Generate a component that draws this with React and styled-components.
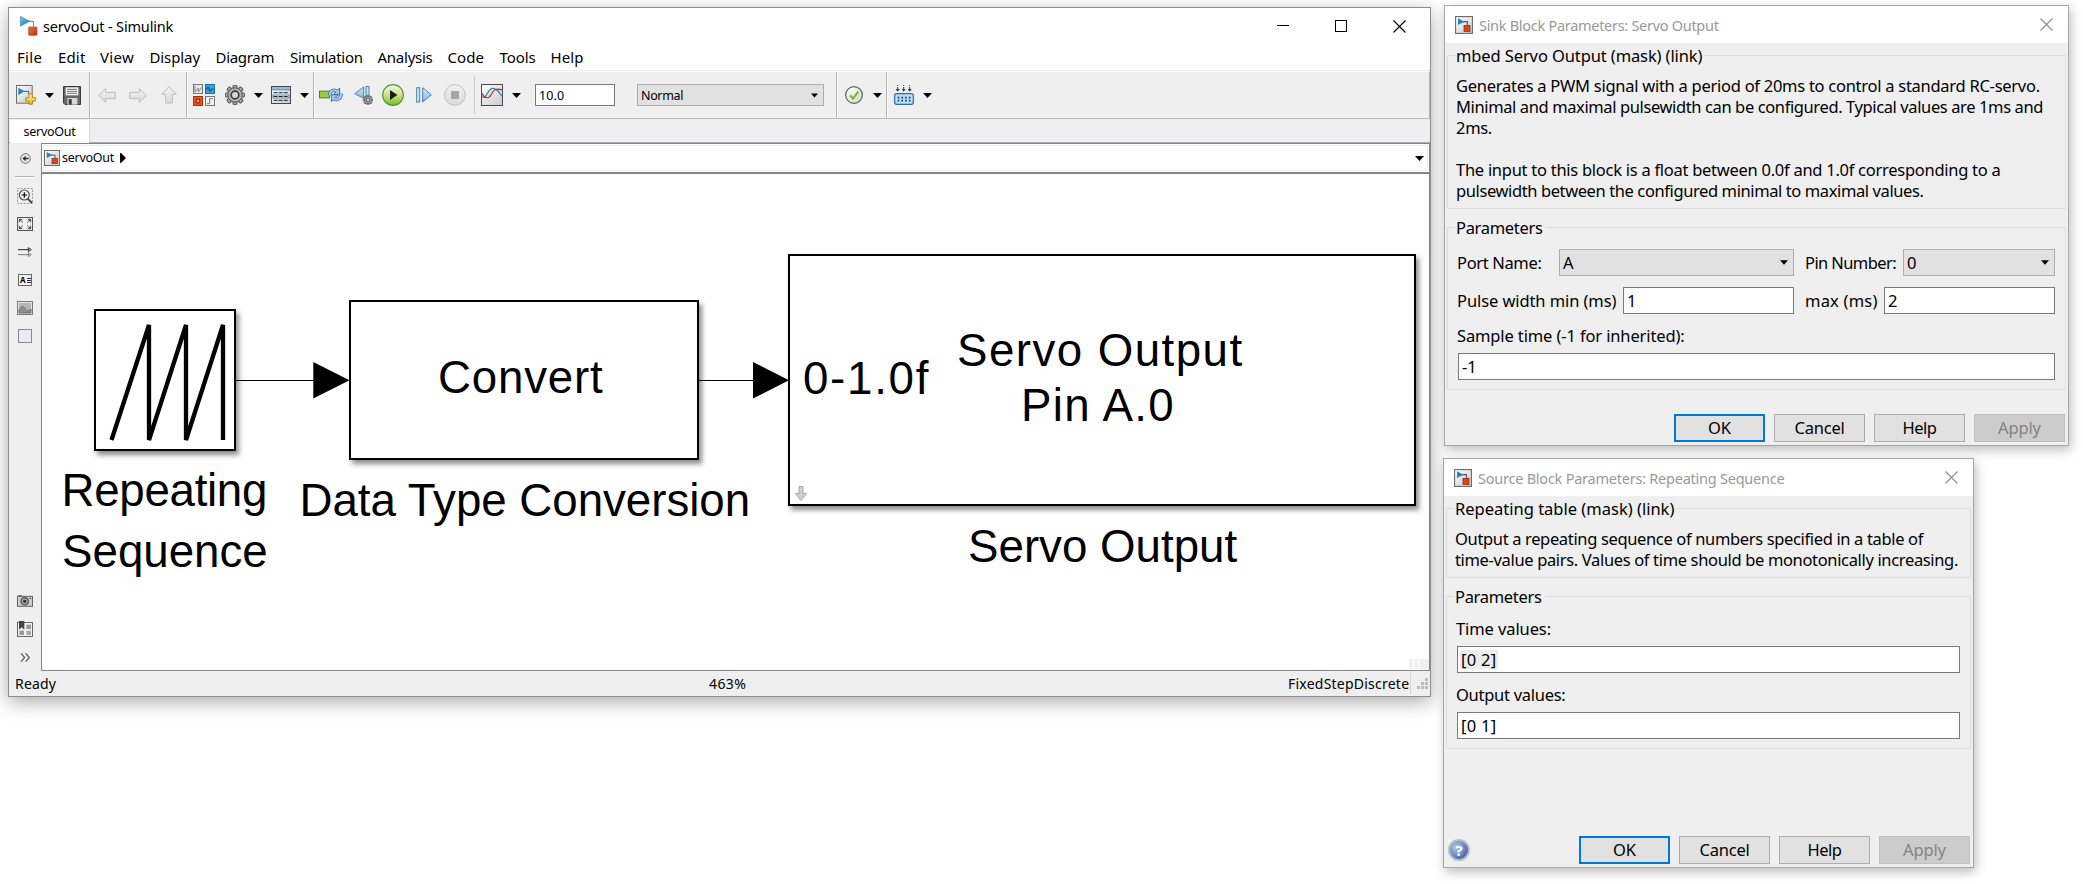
import React from "react";
import styled, { createGlobalStyle, css } from "styled-components";

const uiFont = `"Noto Sans", "Open Sans", sans-serif`;

const GlobalStyle = createGlobalStyle`
  * { box-sizing: border-box; }
  html, body { margin: 0; padding: 0; background: #fff; }
  body { font-family: ${uiFont}; color: #000; overflow: hidden; }
`;

const Desktop = styled.main`
  position: relative;
  width: 2083px;
  height: 884px;
  overflow: hidden;
  background: #fff;
`;

const Tracked = styled.span`
  letter-spacing: ${(p) => p.$ls || 0}px;
  white-space: pre;
`;

const T = ({ ls, children }) => <Tracked $ls={ls}>{children}</Tracked>;

/* ---------- window chrome ---------- */

const AppWindow = styled.section`
  position: absolute;
  left: 8px;
  top: 7px;
  width: 1423px;
  height: 690px;
  display: flex;
  flex-direction: column;
  border: 1px solid #8c8c8c;
  background: #efefef;
  box-shadow: 0 5px 18px rgba(0, 0, 0, 0.33);
`;

const TitleBar = styled.header`
  height: 34px;
  display: flex;
  align-items: center;
  padding: 2px 24px 0 9px;
  background: #fff;
`;

const TitleText = styled.h1`
  flex: 1;
  margin: 0 0 0 5px;
  font-size: 14.5px;
  font-weight: 400;
  line-height: 20px;
`;

const WindowControls = styled.div`
  display: flex;
  align-items: center;
  gap: 46px;
`;

const MenuBar = styled.nav`
  height: 29px;
  display: flex;
  align-items: center;
  padding: 2px 0 0 8px;
  background: #fff;
  border-bottom: 1px solid #ececec;
`;

const MenuItem = styled.span`
  width: ${(p) => p.$w}px;
  font-size: 15px;
  line-height: 20px;
`;

const Toolbar = styled.div`
  height: 48px;
  display: flex;
  border-top: 1px solid #fff;
  border-bottom: 1px solid #b9b9b9;
  border-right: 1px solid #b9b9b9;
`;

const ToolGroup = styled.div`
  display: flex;
  align-items: center;
  width: ${(p) => p.$w}px;
  border-right: ${(p) => (p.$last ? "none" : "1px solid #b4b4b4")};
  box-shadow: ${(p) => (p.$last ? "none" : "1px 0 0 #fff")};
`;

const Tool = styled.span`
  display: flex;
  flex: none;
  margin-left: ${(p) => p.$ml}px;
`;

const ToolRule = styled.span`
  width: 1px;
  height: 38px;
  margin-left: 8px;
  background: #cdcdcd;
`;

const TabStrip = styled.div`
  height: 24px;
  display: flex;
  padding: 1px 0 0 1px;
  border-bottom: 1px solid #a9aab0;
`;

const Tab = styled.div`
  width: 80px;
  height: 23px;
  background: #fff;
  border-right: 1px solid #d8d8d8;
  text-align: center;
  font-size: 12.5px;
  line-height: 24px;
`;

const Workspace = styled.div`
  flex: 1;
  display: flex;
  min-height: 0;
`;

const Palette = styled.aside`
  width: 32px;
  display: flex;
  flex-direction: column;
  align-items: center;
  justify-content: space-between;
`;

const PaletteGroup = styled.div`
  display: flex;
  flex-direction: column;
  align-items: center;
`;

const Slot = styled.span`
  height: ${(p) => p.$h || 28}px;
  display: flex;
  align-items: center;
  justify-content: center;
`;

const PaletteRule = styled.span`
  width: 19px;
  height: 2px;
  margin: 3px 0 4px -1px;
  background: #b4b4b4;
  border-bottom: 1px solid #fff;
`;

const Editor = styled.div`
  flex: 1;
  display: flex;
  flex-direction: column;
  border: 1px solid #83868f;
`;

const Breadcrumb = styled.div`
  height: 26px;
  margin: 1px;
  display: flex;
  align-items: center;
  border: 1px solid #ededed;
  background: #fff;
  font-size: 12.5px;
  line-height: 16px;
  outline: 1px solid #fff;
  padding-right: 3px;
`;

const CrumbText = styled.span`
  margin-left: 2px;
`;

const CrumbCaret = styled.span`
  display: flex;
  margin: -1px 0 0 6px;
  flex: 1;
`;

const StatusBar = styled.footer`
  height: 25px;
  display: flex;
  align-items: center;
  font-size: 14px;
  line-height: 20px;
`;

const StatusCell = styled.span`
  margin-left: ${(p) => p.$ml}px;
  width: ${(p) => p.$w}px;
  margin-top: ${(p) => p.$mt || 0}px;
`;

const StatusRule = styled.span`
  width: 1px;
  height: 21px;
  background: #d5d5d5;
  margin-right: 6px;
`;

/* ---------- model canvas ---------- */

const Canvas = styled.div`
  position: relative;
  flex: 1;
  border-top: 2px solid #83868f;
  background: #fff;
  overflow: hidden;
`;

const Block = styled.div`
  position: absolute;
  left: ${(p) => p.$x - 42}px;
  top: ${(p) => p.$y - 174}px;
  width: ${(p) => p.$w}px;
  height: ${(p) => p.$h}px;
  border: 2px solid #000;
  background: #fff;
  box-shadow: 3px 4px 5px rgba(0, 0, 0, 0.45);
`;

const ModelText = styled.div`
  position: absolute;
  left: ${(p) => p.$x - 42}px;
  top: ${(p) => p.$base - 174 - 46}px;
  font-family: "Liberation Sans", Arial, sans-serif;
  font-size: 45.7px;
  line-height: 60px;
  white-space: pre;
`;

const Wires = styled.svg`
  position: absolute;
  left: 0;
  top: 0;
`;

const LinkBadge = styled.svg`
  position: absolute;
  left: 4px;
  bottom: 2px;
`;

const Sawtooth = styled.svg`
  display: block;
`;

const ScrollCorner = styled.div`
  position: absolute;
  right: 0;
  bottom: 1px;
  display: flex;
  gap: 1px;
  height: 10px;
`;

const ScrollBit = styled.span`
  width: ${(p) => p.$w}px;
  background: #f1f1f1;
`;

/* ---------- parameter dialogs ---------- */

const DialogFrame = styled.section`
  position: absolute;
  left: ${(p) => p.$x}px;
  top: ${(p) => p.$y}px;
  width: ${(p) => p.$w}px;
  height: ${(p) => p.$h}px;
  display: flex;
  flex-direction: column;
  border: 1px solid #a6a6a6;
  background: #efefef;
  box-shadow: 2px 4px 10px rgba(0, 0, 0, 0.26);
  font-size: 16.5px;
  line-height: 20px;
`;

const DialogTitle = styled.header`
  height: 37px;
  display: flex;
  align-items: center;
  padding: 0 15px 0 10px;
  background: #fff;
  color: #999;
  font-size: 14.5px;
`;

const DialogName = styled.h2`
  flex: 1;
  margin: 0 0 0 6px;
  font: inherit;
`;

const Group = styled.div`
  height: ${(p) => p.$h}px;
  margin: ${(p) => p.$mt}px 2px 0;
  border: 1px solid #dcdcdc;
`;

const Legend = styled.div`
  width: fit-content;
  height: 20px;
  margin: -10px 0 0 7px;
  padding: 0 3px 0 1px;
  background: #efefef;
`;

const Description = styled.div`
  margin: 9px 0 0 8px;
  line-height: 21px;
`;

const DescLine = styled.div`
  height: 21px;
`;

const Row = styled.div`
  display: flex;
  align-items: center;
  margin-top: ${(p) => p.$mt}px;
  padding: 0 10px 0 9px;
`;

const FieldLabel = styled.label`
  flex: none;
  width: ${(p) => p.$w}px;
  margin-left: ${(p) => p.$ml || 0}px;
`;

const boxed = css`
  display: flex;
  align-items: center;
  height: ${(p) => p.$h || 27}px;
  margin-left: ${(p) => p.$ml || 0}px;
  padding-left: 3px;
`;

const Input = styled.div`
  ${boxed}
  flex: ${(p) => (p.$w ? `0 0 ${p.$w}px` : 1)};
  border: 1px solid #7a7a7a;
  background: #fff;
  font-size: ${(p) => (p.$small ? 12.5 : 16.5)}px;
`;

const Select = styled.div`
  ${boxed}
  flex: 0 0 ${(p) => p.$w}px;
  justify-content: space-between;
  padding-right: 5px;
  border: 1px solid #adadad;
  background: #e1e1e1;
  font-size: ${(p) => (p.$small ? 12.5 : 16.5)}px;
`;

const Selection = styled.span`
  margin-left: -1px;
  padding: 0 1px;
  height: 19px;
  line-height: 19px;
  background: #ececec;
`;

const DialogFooter = styled.footer`
  display: flex;
  align-items: center;
  gap: 9px;
  margin-top: auto;
  padding: 0 3px 3px;
`;

const FooterHelp = styled.span`
  display: flex;
  flex: 1;
  margin-left: 1px;
`;

const Button = styled.button`
  width: 91px;
  height: 28px;
  padding: 0;
  border: 1px solid #adadad;
  background: #e1e1e1;
  color: #000;
  font-family: inherit;
  font-size: 16.5px;
  line-height: 20px;
  ${(p) => p.$primary && css`border: 2px solid #0078d7;`}
  ${(p) => p.disabled && css`
    border-color: #bfbfbf;
    background: #cccccc;
    color: #838383;
  `}
`;

/* ---------- icons ---------- */

const Svg = styled.svg`
  display: block;
  flex: none;
`;

const Defs = styled.svg`
  position: absolute;
`;

const Icon = ({ w, h, vb, children }) => (
  <Svg width={w} height={h} viewBox={vb || `0 0 ${w * 3} ${h * 3}`} fill="none">
    {children}
  </Svg>
);

const Gradients = () => (
  <Defs width="0" height="0">
    <defs>
      <linearGradient id="blue" x1="0" y1="0" x2="1" y2="1"><stop offset="0" stopColor="#7cc4ee" /><stop offset="1" stopColor="#1a6fb0" /></linearGradient>
      <linearGradient id="orange" x1="0" y1="0" x2="1" y2="1"><stop offset="0" stopColor="#f0702f" /><stop offset="1" stopColor="#b8340c" /></linearGradient>
      <linearGradient id="paper" x1="0" y1="0" x2="1" y2="1"><stop offset="0" stopColor="#fff" /><stop offset="1" stopColor="#c9c9c9" /></linearGradient>
      <linearGradient id="pale" x1="0" y1="0" x2="0" y2="1"><stop offset="0" stopColor="#dcecf8" /><stop offset="1" stopColor="#7fb2db" /></linearGradient>
      <linearGradient id="ghost" x1="0" y1="0" x2="0" y2="1"><stop offset="0" stopColor="#f2f2f2" /><stop offset="1" stopColor="#dadada" /></linearGradient>
      <linearGradient id="green" x1="0" y1="0" x2="0" y2="1"><stop offset="0" stopColor="#f4fbe6" /><stop offset="0.55" stopColor="#c3e07c" /><stop offset="1" stopColor="#6fbb2c" /></linearGradient>
      <linearGradient id="cream" x1="0" y1="0" x2="1" y2="1"><stop offset="0" stopColor="#ffffff" /><stop offset="1" stopColor="#d5d5d5" /></linearGradient>
      <linearGradient id="gold" x1="0" y1="0" x2="0" y2="1"><stop offset="0" stopColor="#fff3a0" /><stop offset="1" stopColor="#eeb010" /></linearGradient>
    </defs>
  </Defs>
);

const Logo = () => (
  <Icon w={20} h={20}>
    <path d="M27 16H46V32" stroke="#777" strokeWidth="3" />
    <path d="M7 1L35 16L7 31Z" fill="url(#blue)" stroke="#2f78ad" strokeWidth="1.5" />
    <rect x="32" y="33" width="25" height="25" rx="2" fill="url(#orange)" stroke="#b04a22" strokeWidth="2" />
  </Icon>
);

const ModelDoc = ({ w = 16 }) => (
  <Icon w={w} h={w} vb="0 0 48 48">
    <rect x="1.5" y="1.5" width="45" height="45" fill="url(#paper)" stroke="#6d6d6d" strokeWidth="3" />
    <path d="M21 15H33V24" stroke="#555" strokeWidth="3" />
    <path d="M8 6L25 15L8 24Z" fill="#2285c5" />
    <rect x="24" y="25" width="16" height="16" fill="#d8481c" stroke="#8b2a10" strokeWidth="2" />
  </Icon>
);

const CaretDown = ({ w = 9 }) => (
  <Icon w={w} h={5} vb="0 0 9 5"><path d="M0 0H9L4.5 5Z" fill="#000" /></Icon>
);

const NewModel = () => (
  <Icon w={20} h={20}>
    <rect x="1.5" y="1.5" width="47" height="53" fill="url(#paper)" stroke="#6d6d6d" strokeWidth="3" />
    <path d="M22 19H38V28" stroke="#555" strokeWidth="3" />
    <path d="M7 8L26 19L7 30Z" fill="#2285c5" />
    <path d="M39 27H49V38H59V48H49V58H39V48H29V38H39Z" fill="url(#gold)" stroke="#ad7d15" strokeWidth="2.5" />
  </Icon>
);

const Save = () => (
  <Icon w={18} h={19}>
    <path d="M1.5 1.5H52.5V55.5H6L1.5 51Z" fill="#666" stroke="#3c3c3c" strokeWidth="3" />
    <rect x="8" y="4" width="38" height="24" fill="#f6f6f6" />
    <path d="M12 10H42M12 16H42M12 22H42" stroke="#555" strokeWidth="2.5" />
    <rect x="13" y="36" width="30" height="20" fill="#d8d8d8" /><rect x="17" y="39" width="9" height="17" fill="#3c3c3c" />
  </Icon>
);

const ghost = { fill: "url(#ghost)", stroke: "#bcbcbc", strokeWidth: 3 };
const Back = () => <Icon w={18} h={15}><path d="M2 22.5L23 2V13H52V32H23V43Z" {...ghost} /></Icon>;
const Forward = () => <Icon w={18} h={15}><path d="M52 22.5L31 2V13H2V32H31V43Z" {...ghost} /></Icon>;
const Up = () => <Icon w={16} h={18}><path d="M24 2L46 25H34V51H14V25H2Z" {...ghost} /></Icon>;

const Library = () => (
  <Icon w={22} h={22}>
    <rect x="1.5" y="1.5" width="27" height="27" fill="#e6e6e6" stroke="#777" strokeWidth="3" />
    <path d="M6 6V24L16 12V24L26 10" stroke="#777" strokeWidth="2.5" />
    <rect x="37.5" y="1.5" width="27" height="27" fill="#37a2dd" stroke="#1f6ea0" strokeWidth="3" />
    <path d="M42 17V11H48V20H55V15H61" stroke="#0c4e7d" strokeWidth="3" />
    <rect x="1.5" y="37.5" width="27" height="27" fill="#e5531d" stroke="#a3350d" strokeWidth="3" />
    <rect x="10" y="46" width="10" height="10" fill="#f4a07c" stroke="#8f2b08" strokeWidth="3" />
    <rect x="37.5" y="37.5" width="27" height="27" fill="#f2f2f2" stroke="#777" strokeWidth="3" />
    <path d="M42 59H50V44H60" stroke="#777" strokeWidth="3" />
  </Icon>
);

const GearShape = ({ color = "#555" }) => (
  <>
    {[0, 45, 90, 135, 180, 225, 270, 315].map((a) => (
      <rect key={a} x="24" y="1" width="12" height="12" rx="2" fill="#aaa" stroke={color} strokeWidth="3" transform={`rotate(${a} 30 30)`} />
    ))}
    <circle cx="30" cy="30" r="21.5" fill="#b5b5b5" stroke={color} strokeWidth="3" />
    <circle cx="30" cy="30" r="11.5" fill="#d5d5d5" stroke="#3c3c3c" strokeWidth="5" />
  </>
);
const Gear = () => <Icon w={20} h={20}><GearShape /></Icon>;

const Explorer = () => (
  <Icon w={20} h={18}>
    <rect x="1.5" y="1.5" width="57" height="51" fill="url(#paper)" stroke="#3e4a56" strokeWidth="3" />
    <rect x="3" y="3" width="54" height="7" fill="#8fbce0" />
    <path d="M2 11.5H58" stroke="#2f6ea3" strokeWidth="2.5" />
    <path d="M8 20H52M8 43H52" stroke="#222" strokeWidth="3" strokeDasharray="12 3" />
    <rect x="6" y="27" width="48" height="9" fill="#e3eff8" stroke="#1f5e8f" strokeWidth="2" />
    <path d="M8 31.5H52" stroke="#222" strokeWidth="3" strokeDasharray="12 3" />
  </Icon>
);

const loopTop = "M32 25C32 10 46 6 57 14";
const loopBottom = "M66 20C67 36 52 42 42 33";
const UpdateDiagram = () => (
  <Icon w={24} h={16}>
    <rect x="1.5" y="12.5" width="30" height="20" fill="#9ecb45" stroke="#55792a" strokeWidth="3" />
    <circle cx="49" cy="23" r="14" fill="#e6f1fa" />
    <path d={`${loopTop}${loopBottom}`} stroke="#44719c" strokeWidth="11" />
    <path d="M62 3V24H42Z" fill="#9cc4e6" stroke="#44719c" strokeWidth="3" />
    <path d="M37 44V23H57Z" fill="#9cc4e6" stroke="#44719c" strokeWidth="3" />
    <path d={`${loopTop}${loopBottom}`} stroke="#a9cdea" strokeWidth="6" />
  </Icon>
);

const StepBack = () => (
  <Icon w={19} h={19}>
    <path d="M29 3V37L2 23Z" fill="url(#pale)" stroke="#4d83b5" strokeWidth="3" />
    <rect x="36" y="1.5" width="9" height="28" fill="#cfe3f3" stroke="#4d83b5" strokeWidth="3" />
    <g transform="translate(27 27) scale(0.5)"><GearShape color="#333" /></g>
  </Icon>
);

const Run = () => (
  <Icon w={22} h={22}>
    <circle cx="33" cy="33" r="31" fill="url(#green)" stroke="#5f8f3b" strokeWidth="3.5" />
    <path d="M24 18L46 33L24 48Z" fill="#1c1c1c" />
  </Icon>
);

const StepForward = () => (
  <Icon w={16} h={16}>
    <rect x="2" y="2" width="9" height="43" fill="#cfe3f3" stroke="#4d83b5" strokeWidth="3" />
    <path d="M20 2V45L46 23.5Z" fill="url(#pale)" stroke="#4d83b5" strokeWidth="3" />
  </Icon>
);

const Stop = () => (
  <Icon w={22} h={22}>
    <circle cx="33" cy="33" r="31" fill="url(#ghost)" stroke="#c0c0c0" strokeWidth="3" />
    <rect x="21" y="21" width="24" height="24" fill="#a5a5a5" />
  </Icon>
);

const Scope = () => (
  <Icon w={22} h={22}>
    <rect x="1.5" y="1.5" width="63" height="63" fill="url(#paper)" stroke="#4a4a4a" strokeWidth="3" />
    <path d="M3 38C16 50 20 12 36 13C48 14 54 24 64 38" stroke="#2d7cc0" strokeWidth="3.5" />
    <path d="M3 28C12 46 24 44 30 32C38 16 46 12 64 18" stroke="#b22a2a" strokeWidth="3.5" />
  </Icon>
);

const Check = () => (
  <Icon w={18} h={18}>
    <circle cx="27" cy="27" r="25" fill="url(#cream)" stroke="#4d6b35" strokeWidth="3.5" />
    <path d="M15 28L24 38L40 17" stroke="#7fb02e" strokeWidth="6.5" />
  </Icon>
);

const Build = () => (
  <Icon w={20} h={20}>
    {[11, 29, 47].map((x) => (
      <g key={x}>
        <path d={`M${x} 0V3M${x} 6V14`} stroke="#123f6b" strokeWidth="3" />
        <path d={`M${x - 6} 12H${x + 6}L${x} 20Z`} fill="#123f6b" />
      </g>
    ))}
    <rect x="2" y="26" width="56" height="32" rx="6" fill="#bddcf5" stroke="#2a6aa8" strokeWidth="3.5" />
    <path d="M11 38H50M11 47H50" stroke="#123f6b" strokeWidth="5" strokeDasharray="5 6.2" />
  </Icon>
);

const HideBrowser = () => (
  <Icon w={11} h={11}>
    <circle cx="16.5" cy="16.5" r="14.5" fill="#ececec" stroke="#6a6a6a" strokeWidth="3" />
    <path d="M26 16.5H14" stroke="#333" strokeWidth="4.5" />
    <path d="M17 8V25L7 16.5Z" fill="#333" />
  </Icon>
);
const ZoomIcon = () => (
  <Icon w={16} h={16}>
    <rect x="1.5" y="1.5" width="45" height="45" stroke="#999" strokeWidth="3" strokeDasharray="6 4" />
    <path d="M32 32L45 45" stroke="#444" strokeWidth="6" />
    <circle cx="22" cy="21" r="15" fill="#f2f2f2" stroke="#555" strokeWidth="3.5" />
    <path d="M14 21H30M22 13V29" stroke="#000" strokeWidth="3.5" />
  </Icon>
);
const Fit = () => (
  <Icon w={16} h={14}>
    <rect x="1.5" y="1.5" width="45" height="39" fill="#f2f2f2" stroke="#555" strokeWidth="3" />
    <path d="M7 16V7H16M7 7L17 16M32 7H41V16M41 7L31 16M7 26V35H16M7 35L17 26M32 35H41V26M41 35L31 26" stroke="#333" strokeWidth="2.8" />
  </Icon>
);
const SampleArrows = () => (
  <Icon w={14} h={10}>
    <path d="M0 8H34" stroke="#222" strokeWidth="3" /><path d="M31 2L40 8L31 14Z" stroke="#222" strokeWidth="2.5" />
    <path d="M0 23H34" stroke="#777" strokeWidth="3" /><path d="M31 17L40 23L31 29Z" stroke="#777" strokeWidth="2.5" />
  </Icon>
);
const Annotation = styled.span`
  display: flex;
  align-items: center;
  gap: 1px;
  width: 14px;
  height: 12px;
  padding-left: 1px;
  border: 1px solid #666;
  background: #f4f4f4;
  font-size: 8px;
  font-weight: 700;
  line-height: 10px;
`;
const ImageIcon = () => (
  <Icon w={16} h={14}>
    <rect x="1.5" y="1.5" width="45" height="39" fill="#e2e2e2" stroke="#7a7a7a" strokeWidth="3" />
    <rect x="6" y="6" width="36" height="30" fill="#b5b5b5" />
    <path d="M6 28C12 14 20 14 26 25C32 34 36 28 42 24V36H6Z" fill="#8f8f8f" stroke="#666" strokeWidth="2.5" />
  </Icon>
);
const AreaIcon = () => (
  <Icon w={14} h={14}><rect x="1.5" y="1.5" width="39" height="39" fill="#e9e9f8" stroke="#8a8a8a" strokeWidth="3" /></Icon>
);
const Camera = () => (
  <Icon w={16} h={12}>
    <rect x="1.5" y="4" width="45" height="30" fill="#cdcdcd" stroke="#666" strokeWidth="3" />
    <path d="M4 2H14" stroke="#666" strokeWidth="4" />
    <circle cx="23" cy="19" r="11" fill="#aaa" stroke="#444" strokeWidth="3.5" /><circle cx="23" cy="19" r="5" fill="#333" />
    <rect x="38" y="8" width="4" height="4" fill="#444" />
  </Icon>
);
const Bookmark = () => (
  <Icon w={16} h={16}>
    <rect x="1.5" y="4.5" width="45" height="42" fill="#f2f2f2" stroke="#666" strokeWidth="3" />
    <rect x="28" y="11" width="14" height="13" fill="#999" /><rect x="7" y="29" width="14" height="13" fill="#999" /><rect x="28" y="29" width="14" height="13" fill="#aaa" />
    <path d="M6 0H22V26L14 19L6 26Z" fill="#444" />
  </Icon>
);
const Chevrons = () => (
  <Icon w={11} h={9}><path d="M3 1L14 13.5L3 26M17 1L28 13.5L17 26" stroke="#555" strokeWidth="3.5" /></Icon>
);
const Close = ({ color = "#000" }) => (
  <Icon w={13} h={13} vb="0 0 13 13"><path d="M0.5 0.5L12.5 12.5M12.5 0.5L0.5 12.5" stroke={color} strokeWidth="1.1" /></Icon>
);
const Grip = () => (
  <Icon w={11} h={11} vb="0 0 11 11">
    {[[8, 0], [4, 4], [8, 4], [0, 8], [4, 8], [8, 8]].map(([x, y]) => <rect key={`${x}-${y}`} x={x} y={y} width="3" height="3" fill="#bcbcbc" />)}
  </Icon>
);
const HelpOrb = styled.span`
  display: flex;
  align-items: center;
  justify-content: center;
  width: 22px;
  height: 22px;
  border: 2px solid #b9bcc6;
  border-radius: 50%;
  background: radial-gradient(circle at 35% 35%, #b9c9ea, #6681c0 55%, #1e3a80);
  color: #fff;
  font-size: 15px;
  font-weight: 700;
  line-height: 18px;
`;

/* ---------- parts ---------- */

const menus = [
  ["File", 41, 0.3], ["Edit", 42, 0.15], ["View", 49.5, 0.3], ["Display", 66, -0.1], ["Diagram", 74.5, -0.3],
  ["Simulation", 87.5, -0.25], ["Analysis", 70, -0.25], ["Code", 52, 0.1], ["Tools", 51, -0.1], ["Help", 50, 0.1],
];

const modelTexts = [
  ["Repeating", 61.5, 506.7, -0.3], ["Sequence", 62, 567.5, 0], ["Data Type Conversion", 299.5, 516.5, -0.03],
  ["Convert", 438, 394.2, 0.8], ["0-1.0f", 803, 394.7, 1.7], ["Servo Output", 957, 366.7, 1.45],
  ["Pin A.0", 1021, 421.7, 1.3], ["Servo Output", 968, 562.7, 0],
];

const Dialog = ({ x, y, w, h, title, ls, help, children }) => (
  <DialogFrame $x={x} $y={y} $w={w} $h={h}>
    <DialogTitle>
      <ModelDoc w={18} />
      <DialogName><T ls={ls}>{title}</T></DialogName>
      <Close color="#8c8c8c" />
    </DialogTitle>
    {children}
    <DialogFooter>
      <FooterHelp>{help && <HelpOrb>?</HelpOrb>}</FooterHelp>
      <Button $primary><T>OK</T></Button>
      <Button><T ls={-0.22}>Cancel</T></Button>
      <Button><T ls={-0.45}>Help</T></Button>
      <Button disabled><T ls={-0.15}>Apply</T></Button>
    </DialogFooter>
  </DialogFrame>
);

export default function App() {
  return (
    <Desktop>
      <GlobalStyle />
      <Gradients />
      <AppWindow>
        <TitleBar>
          <Logo />
          <TitleText><T ls={-0.17}>servoOut - Simulink</T></TitleText>
          <WindowControls>
            <Icon w={12} h={12} vb="0 0 12 12"><path d="M0 5.5H12" stroke="#000" /></Icon>
            <Icon w={12} h={12} vb="0 0 12 12"><rect x="0.5" y="0.5" width="11" height="11" stroke="#000" /></Icon>
            <Close />
          </WindowControls>
        </TitleBar>
        <MenuBar>
          {menus.map(([name, w, ls]) => <MenuItem key={name} $w={w}><T ls={ls}>{name}</T></MenuItem>)}
        </MenuBar>
        <Toolbar>
          <ToolGroup $w={81}>
            <Tool $ml={7}><NewModel /></Tool><Tool $ml={9}><CaretDown /></Tool><Tool $ml={9}><Save /></Tool>
          </ToolGroup>
          <ToolGroup $w={97}>
            <Tool $ml={8}><Back /></Tool><Tool $ml={13}><Forward /></Tool><Tool $ml={14}><Up /></Tool>
          </ToolGroup>
          <ToolGroup $w={127}>
            <Tool $ml={6}><Library /></Tool><Tool $ml={10}><Gear /></Tool><Tool $ml={9}><CaretDown /></Tool>
            <Tool $ml={8}><Explorer /></Tool><Tool $ml={9}><CaretDown /></Tool>
          </ToolGroup>
          <ToolGroup $w={523}>
            <Tool $ml={5}><UpdateDiagram /></Tool><Tool $ml={11}><StepBack /></Tool><Tool $ml={9}><Run /></Tool>
            <Tool $ml={12}><StepForward /></Tool><Tool $ml={12}><Stop /></Tool><ToolRule />
            <Tool $ml={6}><Scope /></Tool><Tool $ml={9}><CaretDown /></Tool>
            <Input $w={80} $h={22} $ml={14} $small><T ls={0.1}>10.0</T></Input>
            <Select $w={187} $h={22} $ml={22} $small><T ls={-0.36}>Normal</T><CaretDown w={7} /></Select>
          </ToolGroup>
          <ToolGroup $w={50}>
            <Tool $ml={8}><Check /></Tool><Tool $ml={10}><CaretDown /></Tool>
          </ToolGroup>
          <ToolGroup $last>
            <Tool $ml={7}><Build /></Tool><Tool $ml={9}><CaretDown /></Tool>
          </ToolGroup>
        </Toolbar>
        <TabStrip><Tab><T ls={-0.27}>servoOut</T></Tab></TabStrip>
        <Workspace>
          <Palette>
            <PaletteGroup>
              <Slot $h={30}><HideBrowser /></Slot>
              <PaletteRule />
              <Slot><ZoomIcon /></Slot>
              <Slot><Fit /></Slot>
              <Slot><SampleArrows /></Slot>
              <Slot>
                <Annotation>A<Icon w={4} h={7} vb="0 0 4 7"><path d="M0 1.5H4M0 3.5H4M0 5.5H4" stroke="#333" /></Icon></Annotation>
              </Slot>
              <Slot><ImageIcon /></Slot>
              <Slot><AreaIcon /></Slot>
            </PaletteGroup>
            <PaletteGroup>
              <Slot><Camera /></Slot>
              <Slot><Bookmark /></Slot>
              <Slot><Chevrons /></Slot>
            </PaletteGroup>
          </Palette>
          <Editor>
            <Breadcrumb>
              <ModelDoc />
              <CrumbText><T ls={-0.27}>servoOut</T></CrumbText>
              <CrumbCaret><Icon w={6} h={10} vb="0 0 6 10"><path d="M0 0H1L6 5L1 10H0Z" fill="#000" /></Icon></CrumbCaret>
              <CaretDown />
            </Breadcrumb>
            <Canvas>
              <Wires width="1387" height="497" viewBox="42 174 1387 497">
                <path d="M236 380.5H314M699 380.5H754" stroke="#000" strokeWidth="1.2" />
                <path d="M313.3 362V398.5L349.5 380.3ZM753 362V398.5L789 380.3Z" fill="#000" />
              </Wires>
              <Block $x={94} $y={309} $w={142} $h={142}>
                <Sawtooth width="138" height="138" viewBox="96 311 138 138" fill="none">
                  <path d="M111.5 440L149 325V440L186 325V440L223 325V440" stroke="#000" strokeWidth="4.3" strokeLinejoin="bevel" />
                </Sawtooth>
              </Block>
              <Block $x={349} $y={300} $w={350} $h={160} />
              <Block $x={788} $y={254} $w={628} $h={252}>
                <LinkBadge width="14" height="16" viewBox="0 0 14 16">
                  <path d="M5 0.5H9V7.5H12.5L7 14.5L1.5 7.5H5Z" fill="#cfcfcf" stroke="#a9a9a9" />
                </LinkBadge>
              </Block>
              {modelTexts.map(([t, x, base, ls]) => (
                <ModelText key={t + base} $x={x} $base={base}><T ls={ls}>{t}</T></ModelText>
              ))}
              <ScrollCorner><ScrollBit $w={4} /><ScrollBit $w={4} /><ScrollBit $w={10} /></ScrollCorner>
            </Canvas>
          </Editor>
        </Workspace>
        <StatusBar>
          <StatusCell $ml={6} $w={694}><T ls={0.2}>Ready</T></StatusCell>
          <StatusCell $ml={0} $w={579} $mt={1}><T ls={0.4}>463%</T></StatusCell>
          <StatusCell $ml={0} $w={122} $mt={1}><T ls={0.23}>FixedStepDiscrete</T></StatusCell>
          <StatusRule />
          <Grip />
        </StatusBar>
      </AppWindow>

      <Dialog x={1444} y={5} w={625} h={441} title="Sink Block Parameters: Servo Output" ls={-0.29}>
        <Group $h={154} $mt={12}>
          <Legend><T ls={-0.11}>mbed Servo Output (mask) (link)</T></Legend>
          <Description>
            <DescLine><T ls={-0.27}>Generates a PWM signal with a period of 20ms to control a standard RC-servo.</T></DescLine>
            <DescLine><T ls={-0.387}>Minimal and maximal pulsewidth can be configured. Typical values are 1ms and</T></DescLine>
            <DescLine><T ls={-0.3}>2ms.</T></DescLine>
            <DescLine />
            <DescLine><T ls={-0.271}>The input to this block is a float between 0.0f and 1.0f corresponding to a</T></DescLine>
            <DescLine><T ls={-0.398}>pulsewidth between the configured minimal to maximal values.</T></DescLine>
          </Description>
        </Group>
        <Group $h={163} $mt={18}>
          <Legend><T ls={-0.32}>Parameters</T></Legend>
          <Row $mt={11}>
            <FieldLabel $w={102}><T ls={-0.35}>Port Name:</T></FieldLabel>
            <Select $w={235}>A<CaretDown w={8} /></Select>
            <FieldLabel $w={98} $ml={11}><T ls={-0.6}>Pin Number:</T></FieldLabel>
            <Select $w={152}>0<CaretDown w={8} /></Select>
          </Row>
          <Row $mt={11}>
            <FieldLabel $w={166}><T ls={-0.09}>Pulse width min (ms)</T></FieldLabel>
            <Input $w={171}>1</Input>
            <FieldLabel $w={79} $ml={11}><T ls={0.2}>max (ms)</T></FieldLabel>
            <Input $w={171}>2</Input>
          </Row>
          <Row $mt={12}><FieldLabel><T ls={-0.13}>Sample time (-1 for inherited):</T></FieldLabel></Row>
          <Row $mt={7}><Input $ml={1}><T>-1</T></Input></Row>
        </Group>
      </Dialog>

      <Dialog x={1443} y={458} w={531} h={410} title="Source Block Parameters: Repeating Sequence" ls={-0.235} help>
        <Group $h={70} $mt={12}>
          <Legend><T>Repeating table (mask) (link)</T></Legend>
          <Description>
            <DescLine><T ls={-0.35}>Output a repeating sequence of numbers specified in a table of</T></DescLine>
            <DescLine><T ls={-0.345}>time-value pairs. Values of time should be monotonically increasing.</T></DescLine>
          </Description>
        </Group>
        <Group $h={153} $mt={18}>
          <Legend><T ls={-0.32}>Parameters</T></Legend>
          <Row $mt={12}><FieldLabel><T ls={-0.1}>Time values:</T></FieldLabel></Row>
          <Row $mt={7}><Input $ml={1}><Selection><T ls={0.3}>[0 2]</T></Selection></Input></Row>
          <Row $mt={12}><FieldLabel><T ls={-0.28}>Output values:</T></FieldLabel></Row>
          <Row $mt={7}><Input $ml={1}><T ls={0.3}>[0 1]</T></Input></Row>
        </Group>
      </Dialog>
    </Desktop>
  );
}
